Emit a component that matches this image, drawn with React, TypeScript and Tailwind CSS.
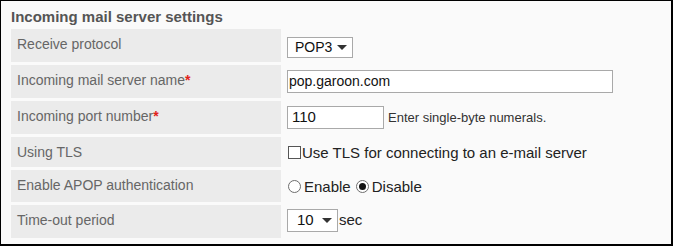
import React from "react";

// Incoming mail server settings panel (Garoon-style admin form).

const FONT = { fontFamily: '"Liberation Sans", Arial, sans-serif' };

function Label({ text, required }: { text: string; required?: boolean }) {
  return (
    <div className="w-[270px] shrink-0 bg-[#ebebeb] pl-[6px] pt-[7px] text-[14px] leading-4 text-[#666]">
      {text}
      {required && <span className="text-[#e2231a] font-bold">*</span>}
    </div>
  );
}

function FakeSelect({ value, box, text }: { value: string; box: string; text: string }) {
  return (
    <div className={`${box} ${text} flex items-center border border-[#a9a9a9] bg-white pr-[5px] text-[#111]`}>
      <span className="flex-1">{value}</span>
      <span className="h-0 w-0 border-x-[5px] border-t-[5px] border-x-transparent border-t-[#333]" />
    </div>
  );
}

function Radio({ checked }: { checked?: boolean }) {
  return (
    <span className="flex h-[13px] w-[13px] items-center justify-center rounded-full border border-[#6d6d6d] bg-white">
      {checked && <span className="h-[7px] w-[7px] rounded-full bg-[#111]" />}
    </span>
  );
}

export default function App() {
  return (
    <div
      style={FONT}
      className="w-[673px] h-[246px] border-l border-t border-r-2 border-b-2 border-black bg-[#fafafa] px-[10px] pt-[7px]"
    >
      <div className="text-[15px] leading-[17px] font-bold text-[#555] mb-[4px]">
        Incoming mail server settings
      </div>

      <div className="flex flex-col gap-[3px]">
        <div className="flex h-[33px]">
          <Label text="Receive protocol" />
          <div className="pl-[6px] pt-[8px]">
            <FakeSelect value="POP3" box="w-[66px] h-[21px] pl-[7px]" text="text-[14px]" />
          </div>
        </div>

        <div className="flex h-[33px]">
          <Label text="Incoming mail server name" required />
          <div className="pl-[6px] pt-[5px]">
            <div className="w-[326px] h-[23px] flex items-center border border-[#a9a9a9] bg-white pl-[1px] text-[14px] text-[#111]">
              pop.garoon.com
            </div>
          </div>
        </div>

        <div className="flex h-[33px]">
          <Label text="Incoming port number" required />
          <div className="flex items-center gap-[4px] pl-[6px] pt-[5px] self-start">
            <div className="w-[97px] h-[23px] flex items-center border border-[#a9a9a9] bg-white pl-[4px] text-[15px] text-[#111]">
              110
            </div>
            <span className="text-[13px] text-[#333]">Enter single-byte numerals.</span>
          </div>
        </div>

        <div className="flex h-[30px]">
          <Label text="Using TLS" />
          <div className="flex items-center pl-[7px] pt-[7px] self-start text-[15px] leading-[17px] text-[#222]">
            <span className="mr-[1px] h-[13px] w-[13px] border border-[#555] bg-white" />
            Use TLS for connecting to an e-mail server
          </div>
        </div>

        <div className="flex h-[32px]">
          <Label text="Enable APOP authentication" />
          <div className="flex items-center pl-[7px] pt-[8px] self-start text-[15px] leading-[17px] text-[#222]">
            <Radio />
            <span className="ml-[3px] mr-[5px]">Enable</span>
            <Radio checked />
            <span className="ml-[3px]">Disable</span>
          </div>
        </div>

        <div className="flex h-[33px]">
          <Label text="Time-out period" />
          <div className="flex items-center pl-[6px] pt-[4px] self-start text-[15px] text-[#222]">
            <FakeSelect value="10" box="w-[51px] h-[23px] pl-[9px]" text="text-[15px]" />
            <span className="ml-[1px]">sec</span>
          </div>
        </div>
      </div>
    </div>
  );
}
